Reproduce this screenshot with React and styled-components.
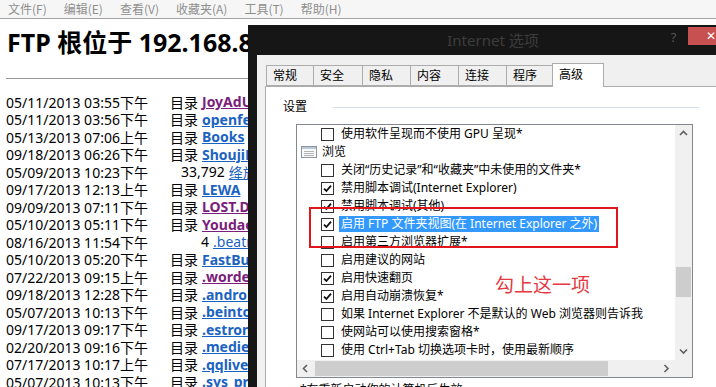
import styled, { createGlobalStyle } from "styled-components";

const menuItems = ["文件(F)", "编辑(E)", "查看(V)", "收藏夹(A)", "工具(T)", "帮助(H)"];

const listing = [
  { stamp: "05/11/2013 03:55下午", name: "JoyAdUnion", visited: true },
  { stamp: "05/11/2013 03:56下午", name: "openfeint" },
  { stamp: "05/13/2013 07:06上午", name: "Books" },
  { stamp: "09/18/2013 06:26下午", name: "ShoujiKong" },
  { stamp: "05/09/2013 10:23下午", name: "绛旅记录.txt", size: "33,792", pad: 11 },
  { stamp: "09/17/2013 12:13上午", name: "LEWA" },
  { stamp: "09/09/2013 07:11下午", name: "LOST.DIR", visited: true },
  { stamp: "05/10/2013 05:11下午", name: "Youdao", visited: true },
  { stamp: "08/16/2013 11:54下午", name: ".beatrix", size: "4", pad: 31 },
  { stamp: "05/10/2013 05:20下午", name: "FastBurn" },
  { stamp: "07/22/2013 09:15上午", name: ".wordeclipse", visited: true },
  { stamp: "09/18/2013 12:28下午", name: ".android" },
  { stamp: "05/07/2013 10:13下午", name: ".beintoo" },
  { stamp: "09/17/2013 09:17下午", name: ".estrongs" },
  { stamp: "02/20/2013 09:16下午", name: ".medieval" },
  { stamp: "07/17/2013 10:17上午", name: ".qqlive" },
  { stamp: "05/07/2013 10:13下午", name: ".sys_pre" },
];

const tabs = [
  { label: "常规", width: 48 },
  { label: "安全", width: 50 },
  { label: "隐私", width: 49 },
  { label: "内容", width: 49 },
  { label: "连接", width: 49 },
  { label: "程序", width: 47 },
  { label: "高级", width: 52, active: true },
];

const options = [
  { text: "使用软件呈现而不使用 GPU 呈现*" },
  { text: "浏览", group: true },
  { text: "关闭“历史记录”和“收藏夹”中未使用的文件夹*" },
  { text: "禁用脚本调试(Internet Explorer)", checked: true },
  { text: "禁用脚本调试(其他)", checked: true },
  { text: "启用 FTP 文件夹视图(在 Internet Explorer 之外)", checked: true, selected: true },
  { text: "启用第三方浏览器扩展*" },
  { text: "启用建议的网站" },
  { text: "启用快速翻页", checked: true },
  { text: "启用自动崩溃恢复*", checked: true },
  { text: "如果 Internet Explorer 不是默认的 Web 浏览器则告诉我" },
  { text: "使网站可以使用搜索窗格*" },
  { text: "使用 Ctrl+Tab 切换选项卡时，使用最新顺序" },
];

const Chevron = ({ dir }) => {
  const paths = {
    up: "M1 5 L4.5 1.5 L8 5",
    down: "M1 1.5 L4.5 5 L8 1.5",
    left: "M5 1 L1.5 4.5 L5 8",
    right: "M1.5 1 L5 4.5 L1.5 8",
  };
  const flat = dir === "up" || dir === "down";
  return (
    <svg width={flat ? 9 : 7} height={flat ? 7 : 9} viewBox={flat ? "0 0 9 7" : "0 0 7 9"}>
      <path d={paths[dir]} fill="none" stroke="#606060" strokeWidth="1.6" />
    </svg>
  );
};

const GroupIcon = () => (
  <svg width="16" height="12" viewBox="0 0 16 12">
    <rect x="0.5" y="0.5" width="15" height="11" fill="#fafafa" stroke="#8c96a0" />
    <rect x="1" y="1" width="14" height="2" fill="#b9c7d6" />
    <path d="M3 5.5h10M3 7.5h10M3 9.5h10" stroke="#b4b4b4" />
  </svg>
);

const CheckBox = ({ checked }) => (
  <Box>
    {checked && (
      <svg width="11" height="11" viewBox="0 0 11 11">
        <path d="M2 5.6 L4.4 8 L9 2.6" fill="none" stroke="#111" strokeWidth="1.8" />
      </svg>
    )}
  </Box>
);

const App = () => {
  return (
    <>
      <GlobalStyle />
      <Page>
        <MenuBar>
          {menuItems.map((item) => (
            <MenuItem key={item}>{item}</MenuItem>
          ))}
        </MenuBar>
        <Content>
          <Heading>FTP 根位于 192.168.85.1</Heading>
          <Rule />
          <Listing>
            {listing.map((row, i) => (
              <Row key={i}>
                <Stamp>{row.stamp}</Stamp>
                {row.size ? (
                  <Kind $pad={row.pad}>{row.size}</Kind>
                ) : (
                  <Kind $pad={0}>目录</Kind>
                )}
                <Entry $visited={row.visited} $file={!!row.size}>
                  {row.name}
                </Entry>
              </Row>
            ))}
          </Listing>
        </Content>

        <Dialog>
          <TitleBar>
            <Caption>Internet 选项</Caption>
            <HelpMark>?</HelpMark>
            <CloseBtn>✕</CloseBtn>
          </TitleBar>
          <Body>
            <TabStrip>
              {tabs.map((t) => (
                <Tab key={t.label} $active={t.active} $width={t.width}>
                  {t.label}
                </Tab>
              ))}
            </TabStrip>
            <Panel>
              <GroupHead>
                <span>设置</span>
                <Etch />
              </GroupHead>
              <ListBox>
                <Rows>
                  {options.map((o, i) => (
                    <Option key={i} $group={o.group}>
                      {o.group ? <GroupIcon /> : <CheckBox checked={o.checked} />}
                      <OptionText $selected={o.selected} $group={o.group}>
                        {o.text}
                      </OptionText>
                    </Option>
                  ))}
                </Rows>
                <VScroll>
                  <ArrowBtn><Chevron dir="up" /></ArrowBtn>
                  <VTrack>
                    <VThumb />
                  </VTrack>
                  <ArrowBtn><Chevron dir="down" /></ArrowBtn>
                </VScroll>
                <HScroll>
                  <ArrowBtn><Chevron dir="left" /></ArrowBtn>
                  <HTrack>
                    <HThumb />
                  </HTrack>
                  <ArrowBtn><Chevron dir="right" /></ArrowBtn>
                </HScroll>
                <Corner />
              </ListBox>
              <Footnote>*在重新启动你的计算机后生效</Footnote>
            </Panel>
          </Body>
        </Dialog>

        <RedFrame />
        <RedNote>勾上这一项</RedNote>
      </Page>
    </>
  );
};

export default App;

const GlobalStyle = createGlobalStyle`
  html, body {
    margin: 0;
    padding: 0;
    background: #fff;
  }
  body {
    font-family: "Noto Sans", "Noto Sans CJK SC", sans-serif;
    overflow: hidden;
  }
`;

const Page = styled.div`
  position: relative;
  width: 716px;
  height: 387px;
  overflow: hidden;
  background: #fff;
`;

const MenuBar = styled.div`
  display: flex;
  gap: 17px;
  height: 18px;
  padding-left: 8px;
  background: #f6f6f6;
  border-bottom: 1px solid #a3a3a3;
`;

const MenuItem = styled.span`
  font-size: 12px;
  line-height: 18px;
  color: #8f8f8f;
  font-family: "Noto Sans CJK SC", sans-serif;
`;

const Content = styled.div`
  padding: 0 6px;
`;

const Heading = styled.h1`
  margin: 7px 0 0 1px;
  font-size: 25px;
  line-height: 32px;
  font-weight: 700;
  color: #000;
  white-space: nowrap;
  font-family: "Noto Sans", "Noto Sans CJK SC", sans-serif;
`;

const Rule = styled.div`
  margin-top: 20px;
  height: 1px;
  background: #9a9a9a;
`;

const Listing = styled.div`
  margin-top: 14px;
`;

const Row = styled.div`
  display: flex;
  align-items: center;
  height: 17.5px;
  font-size: 14px;
  color: #000;
  white-space: nowrap;
`;

const Stamp = styled.span`
  width: 164px;
  flex-shrink: 0;
`;

const Kind = styled.span`
  margin-left: ${(props) => props.$pad}px;
`;

const Entry = styled.span`
  margin-left: ${(props) => (props.$file ? 4 : 4)}px;
  font-weight: ${(props) => (props.$file ? 400 : 700)};
  color: ${(props) => (props.$visited ? "#7a1d7c" : "#1b63c2")};
  text-decoration: underline;
`;

const Dialog = styled.div`
  position: absolute;
  left: 248px;
  top: 25px;
  width: 490px;
  height: 380px;
  display: flex;
  flex-direction: column;
  background: #161616;
  z-index: 2;
`;

const TitleBar = styled.div`
  display: flex;
  align-items: flex-start;
  height: 30px;
  padding-right: 5px;
`;

const Caption = styled.div`
  flex: 1;
  padding-left: 73px;
  text-align: center;
  line-height: 30px;
  font-size: 15px;
  color: #3d3d3d;
`;

const HelpMark = styled.div`
  width: 17px;
  margin-right: 6px;
  text-align: center;
  line-height: 22px;
  margin-top: 1px;
  font-size: 13px;
  color: #555;
`;

const CloseBtn = styled.div`
  width: 45px;
  height: 18px;
  margin-top: 2px;
  background: #c75050;
  color: #fff;
  font-size: 12px;
  line-height: 18px;
  text-align: center;
`;

const Body = styled.div`
  flex: 1;
  margin-left: 9px;
  padding: 8px 0 0 8px;
  background: #f0f0f0;
  display: flex;
  flex-direction: column;
`;

const TabStrip = styled.div`
  display: flex;
  align-items: flex-end;
  height: 23px;
  padding-left: 1px;
  position: relative;
  z-index: 1;
`;

const Tab = styled.div`
  box-sizing: border-box;
  width: ${(props) => props.$width}px;
  height: ${(props) => (props.$active ? 24 : 21)}px;
  margin-left: -1px;
  margin-bottom: ${(props) => (props.$active ? -1 : 0)}px;
  padding-left: 6px;
  border: 1px solid #acacac;
  border-bottom: ${(props) => (props.$active ? "none" : "1px solid #acacac")};
  background: ${(props) => (props.$active ? "#fff" : "#f0f0f0")};
  font-size: 12px;
  line-height: ${(props) => (props.$active ? 21 : 20)}px;
  color: #000;
  &:first-child {
    margin-left: 0;
  }
`;

const Panel = styled.div`
  flex: 1;
  border: 1px solid #acacac;
  border-right: none;
  background: #fff;
  padding-left: 17px;
`;

const GroupHead = styled.div`
  display: flex;
  align-items: center;
  gap: 26px;
  width: 416px;
  margin-top: 11px;
  font-size: 12px;
  line-height: 18px;
  color: #000;
`;

const Etch = styled.div`
  flex: 1;
  height: 1px;
  background: #d5dfe5;
`;

const ListBox = styled.div`
  box-sizing: border-box;
  width: 397px;
  height: 254px;
  margin: 8px 0 0 13px;
  border: 1px solid #828790;
  display: grid;
  grid-template-columns: 1fr 17px;
  grid-template-rows: 1fr 17px;
  background: #fff;
`;

const Rows = styled.div`
  overflow: hidden;
`;

const Option = styled.div`
  display: flex;
  align-items: center;
  height: 18px;
  padding-left: ${(props) => (props.$group ? 4 : 24)}px;
  white-space: nowrap;
`;

const Box = styled.span`
  box-sizing: border-box;
  width: 13px;
  height: 13px;
  margin-right: 5px;
  border: 1px solid #333;
  background: #fff;
  display: grid;
  place-items: center;
  flex-shrink: 0;
`;

const OptionText = styled.span`
  margin-left: ${(props) => (props.$group ? 3 : 0)}px;
  padding: 0 2px;
  font-size: 12px;
  line-height: 16px;
  color: ${(props) => (props.$selected ? "#fff" : "#000")};
  background: ${(props) => (props.$selected ? "#3399ff" : "transparent")};
`;

const VScroll = styled.div`
  display: flex;
  flex-direction: column;
  background: #f0f0f0;
`;

const HScroll = styled.div`
  display: flex;
  background: #f0f0f0;
`;

const ArrowBtn = styled.div`
  width: 17px;
  height: 17px;
  display: grid;
  place-items: center;
  flex-shrink: 0;
`;

const VTrack = styled.div`
  flex: 1;
  padding-top: 125px;
`;

const VThumb = styled.div`
  height: 30px;
  margin: 0 1px;
  background: #cdcdcd;
`;

const HTrack = styled.div`
  flex: 1;
  padding-left: 1px;
  display: flex;
  align-items: stretch;
`;

const HThumb = styled.div`
  width: 293px;
  margin: 1px 0;
  background: #cdcdcd;
`;

const Corner = styled.div`
  background: #f0f0f0;
`;

const Footnote = styled.div`
  margin: 3px 0 0 17px;
  font-size: 12px;
  line-height: 18px;
  color: #000;
`;

const RedFrame = styled.div`
  position: absolute;
  left: 309px;
  top: 207px;
  width: 309px;
  height: 41px;
  box-sizing: border-box;
  border: 2px solid #e1161d;
  z-index: 3;
`;

const RedNote = styled.div`
  position: absolute;
  left: 495px;
  top: 271px;
  font-size: 19px;
  line-height: 26px;
  color: #e5393f;
  font-family: "Noto Sans CJK SC", sans-serif;
  z-index: 3;
`;
